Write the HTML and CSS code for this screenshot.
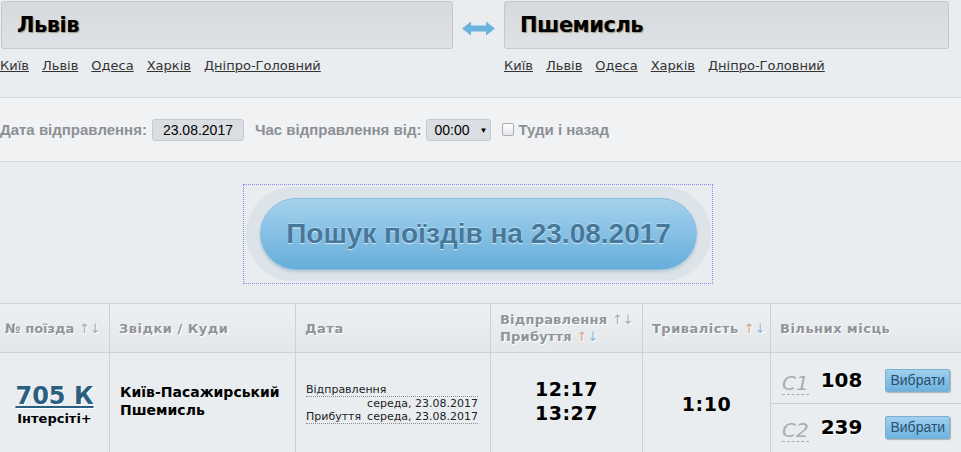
FILE: index.html
```html
<!DOCTYPE html>
<html>
<head>
    <meta charset="utf-8">
    <title>Пошук поїздів</title>
    <link rel="stylesheet" href="styles.css">
</head>
<body>
    <div class="stations">
        <div class="station station-from">
            <div class="station-input">Львів</div>
            <div class="station-links">
                <a href="#">Київ</a>
                <a href="#">Львів</a>
                <a href="#">Одеса</a>
                <a href="#">Харків</a>
                <a href="#">Дніпро-Головний</a>
            </div>
        </div>
        <div class="swap">
            <svg width="33" height="15" viewBox="0 0 33 15">
                <path d="M0 7.5 L9 0.5 L9 4.5 L24 4.5 L24 0.5 L33 7.5 L24 14.5 L24 10.5 L9 10.5 L9 14.5 Z" fill="#6cb2df"/>
            </svg>
        </div>
        <div class="station station-to">
            <div class="station-input">Пшемисль</div>
            <div class="station-links">
                <a href="#">Київ</a>
                <a href="#">Львів</a>
                <a href="#">Одеса</a>
                <a href="#">Харків</a>
                <a href="#">Дніпро-Головний</a>
            </div>
        </div>
    </div>

    <div class="options">
        <span class="opt-label">Дата відправлення:</span>
        <span class="date-box">23.08.2017</span>
        <span class="opt-label">Час відправлення від:</span>
        <span class="time-select">00:00 <span class="caret">&#9660;</span></span>
        <span class="check"></span>
        <span class="opt-label">Туди і назад</span>
    </div>

    <div class="search-area">
        <div class="search-focus">
            <div class="search-halo">
                <button class="search-btn">Пошук поїздів на 23.08.2017</button>
            </div>
        </div>
    </div>

    <table class="trains">
        <tr>
            <th class="col-num">№ поїзда <span class="sort">&#8593;&#8595;</span></th>
            <th class="col-route">Звідки / Куди</th>
            <th class="col-date">Дата</th>
            <th class="col-time">Відправлення <span class="sort">&#8593;&#8595;</span><br>Прибуття <span class="sort"><span class="up">&#8593;</span><span class="down">&#8595;</span></span></th>
            <th class="col-dur">Тривалість <span class="sort"><span class="up">&#8593;</span><span class="down">&#8595;</span></span></th>
            <th class="col-seats">Вільних місць</th>
        </tr>
        <tr>
            <td class="num">
                <a href="#" class="train-no">705 К</a>
                <div class="train-kind">Інтерсіті+</div>
            </td>
            <td class="route">Київ-Пасажирський<br>Пшемисль</td>
            <td class="dates">
                <div class="date-line"><span>Відправлення</span></div>
                <div class="date-right">середа, 23.08.2017</div>
                <div class="date-line"><span>Прибуття</span><span>середа, 23.08.2017</span></div>
            </td>
            <td class="times">12:17<br>13:27</td>
            <td class="dur">1:10</td>
            <td class="seats">
                <div class="seat-row">
                    <span class="seat-class">С1</span>
                    <span class="seat-count">108</span>
                    <button class="pick">Вибрати</button>
                </div>
                <div class="seat-row">
                    <span class="seat-class">С2</span>
                    <span class="seat-count">239</span>
                    <button class="pick">Вибрати</button>
                </div>
            </td>
        </tr>
    </table>
</body>
</html>
```

FILE: styles.css
```css
body {
    margin: 0;
    padding: 0;
    background-color: #e9edf0;
    font-family: "DejaVu Sans", Verdana, sans-serif;
    color: #000;
    overflow: hidden;
}

/* stations */
.stations {
    display: flex;
    padding-top: 1px;
    height: 96px;
    border-bottom: 1px solid #d3d8dd;
}
.station-from {
    margin-left: 1px;
    width: 452px;
}
.station-to {
    width: 445px;
}
.station-input {
    height: 46px;
    border: 1px solid #c3c8cd;
    border-radius: 3px;
    background: linear-gradient(#d6d9dd, #dfe2e5);
    font-size: 21px;
    letter-spacing: -0.5px;
    font-weight: bold;
    line-height: 47px;
    padding-left: 15px;
    text-shadow: 1px 1px 1px rgba(110, 90, 50, 0.55);
}
.station-links {
    margin-top: 9px;
    display: flex;
    gap: 13px;
    font-size: 13px;
}
.station-links a {
    color: #333;
}
.station-from .station-links {
    margin-left: -1px;
}
.swap {
    width: 51px;
    display: flex;
    justify-content: center;
    padding-top: 20px;
    box-sizing: border-box;
}

/* options row */
.options {
    height: 63px;
    background-color: #f0f2f4;
    border-bottom: 1px solid #d3d8dd;
    display: flex;
    align-items: center;
    font-family: "Liberation Sans", Arial, sans-serif;
}
.opt-label {
    font-size: 15px;
    font-weight: bold;
    color: #8c9095;
}
.date-box {
    margin-left: 5px;
    margin-right: 11px;
    width: 90px;
    height: 20px;
    line-height: 20px;
    text-align: center;
    background-color: #dadee2;
    border: 1px solid #c5cacf;
    border-radius: 3px;
    font-size: 14px;
}
.time-select {
    margin-left: 5px;
    width: 56px;
    height: 20px;
    line-height: 20px;
    padding-left: 7px;
    background-color: #dadee2;
    border: 1px solid #c5cacf;
    border-radius: 3px;
    font-size: 14px;
}
.caret {
    font-size: 8px;
    margin-left: 6px;
    vertical-align: 2px;
}
.check {
    margin-left: 11px;
    margin-right: 4px;
    width: 10px;
    height: 11px;
    border: 1px solid #a9adb2;
    border-radius: 2px;
    background: linear-gradient(#fff, #e4e6e8);
}

/* search button */
.search-area {
    height: 142px;
    padding-top: 22px;
    box-sizing: border-box;
    border-bottom: 1px solid #cfd4d9;
}
.search-focus {
    margin-left: 243px;
    width: 470px;
    height: 100px;
    border: 1px dotted #8a8af5;
    padding: 2px 0 0 2px;
    box-sizing: border-box;
}
.search-halo {
    width: 465px;
    height: 94px;
    box-sizing: border-box;
    padding: 11px 0 0 14px;
    border-radius: 47px;
    background-color: #dce3e9;
}
.search-btn {
    width: 437px;
    height: 72px;
    border: 1px solid #88bde0;
    border-radius: 36px;
    background: linear-gradient(#a5d1ed, #66aedb);
    box-shadow: 0 2px 3px rgba(80, 120, 150, 0.25);
    font-family: "Liberation Sans", Arial, sans-serif;
    font-size: 28px;
    font-weight: bold;
    color: #45789a;
    text-shadow: 0 1px 1px rgba(255, 255, 255, 0.7), 0 -1px 0 rgba(255, 255, 255, 0.3);
    cursor: pointer;
}

/* table */
.trains {
    width: 961px;
    border-collapse: collapse;
    table-layout: fixed;
}
.trains th,
.trains td {
    border-right: 1px solid #cdd1d5;
    border-bottom: 1px solid #cdd1d5;
    padding: 0;
}
.trains th {
    height: 48px;
    background: linear-gradient(#edf0f2, #e3e7ea);
    font-size: 13px;
    letter-spacing: 0.5px;
    font-weight: bold;
    color: #909499;
    text-shadow: 1px 1px 0 #fff;
    text-align: left;
    padding-left: 9px;
}
.trains th.col-num {
    padding-left: 5px;
    width: 104px;
    letter-spacing: 0;
}
.trains th.col-route { width: 176px; }
.trains th.col-date { width: 185px; }
.trains th.col-time { width: 142px; line-height: 17px; letter-spacing: 0.2px; }
.trains th.col-dur { width: 118px; }
.trains th.col-seats { border-right: none; }
.sort {
    font-weight: normal;
    letter-spacing: 0;
    color: #a6adb4;
}
.sort .up { color: #dba47e; }
.sort .down { color: #8ab5d8; }

.trains td {
    height: 95px;
    vertical-align: middle;
}
.num {
    text-align: center;
}
.train-no {
    font-size: 24px;
    font-weight: bold;
    color: #2b5f80;
    text-shadow: 1px 1px 0 #fff;
}
.train-kind {
    font-size: 13px;
    font-weight: bold;
    margin-top: 1px;
}
.route {
    padding-left: 10px !important;
    font-size: 14px;
    font-weight: bold;
    line-height: 18px;
    padding-bottom: 6px !important;
}
.dates {
    font-size: 11px;
    padding: 0 12px 0 10px !important;
    color: #222;
    line-height: 13px;
}
.date-line {
    display: flex;
    justify-content: space-between;
    border-bottom: 1px dotted #8a8e92;
}
.date-right {
    text-align: right;
}
.times {
    text-align: center;
    font-size: 19px;
    letter-spacing: 0.5px;
    font-weight: bold;
    line-height: 24px;
    padding-bottom: 6px !important;
}
.dur {
    text-align: center;
    font-size: 19px;
    letter-spacing: 0.5px;
    font-weight: bold;
}
.seats {
    border-right: none !important;
}
.seat-row {
    height: 46px;
    display: flex;
    align-items: center;
    padding-left: 11px;
}
.seat-row + .seat-row {
    border-top: 1px solid #cdd1d5;
}
.seat-class {
    font-size: 20px;
    font-style: italic;
    color: #a9adb1;
    border-bottom: 1px dashed #a9adb1;
    line-height: 22px;
    margin-top: 6px;
}
.seat-count {
    margin-left: 12px;
    font-size: 20px;
    font-weight: bold;
    text-shadow: 1px 1px 0 #fff;
}
.pick {
    margin-left: 23px;
    height: 23px;
    padding: 0 4px;
    border: 1px solid #7fafcf;
    border-radius: 2px;
    background: linear-gradient(#9fd0ee, #6cb3df);
    box-shadow: 1px 1px 1px rgba(0, 0, 0, 0.25);
    font-family: "Liberation Sans", Arial, sans-serif;
    font-size: 14px;
    color: #2d4f6c;
    cursor: pointer;
}
```
